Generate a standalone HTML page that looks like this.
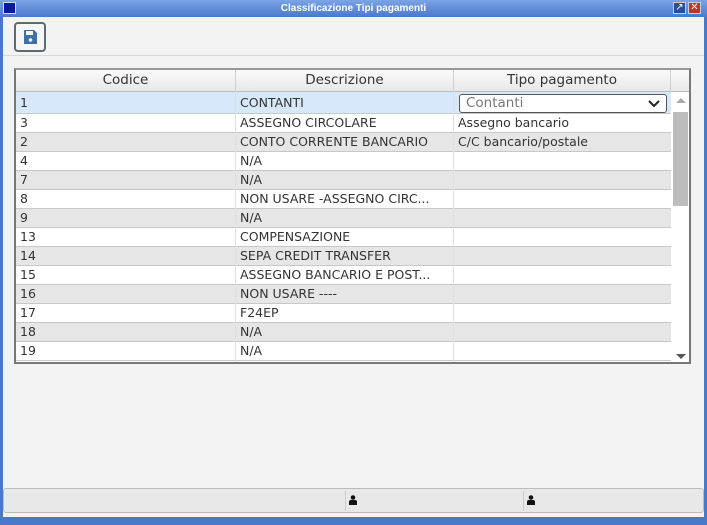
<!DOCTYPE html>
<html><head><style>
*{margin:0;padding:0;box-sizing:border-box}
body{width:707px;height:525px;overflow:hidden;background:#4a78c8;font-family:"Liberation Sans","DejaVu Sans",sans-serif;position:relative}
.title{position:absolute;left:0;top:0;width:707px;height:17px;background:linear-gradient(#7aa4e6,#4a78cc);color:#fff;font-size:10px;font-weight:bold;text-align:center;line-height:17px}
.logo{position:absolute;left:3px;top:2px;width:13px;height:12px;background:#0a1aa0;border:1px solid #cde}
.btn{position:absolute;top:2px;width:13px;height:12px;border:1px solid #ccd;color:#fff;font-size:10px;line-height:10px;text-align:center}
.client{position:absolute;left:3px;top:17px;width:701px;height:500px;background:#f3f3f3}
.tb{position:absolute;left:11px;top:5px;width:32px;height:30px;border:2px solid #606870;border-radius:4px;background:#f6f6f6}
.sep{position:absolute;left:0;top:38px;width:701px;height:1px;background:#d8d8d8}
.grid{position:absolute;left:11px;top:51px;width:677px;height:296px;border:2px solid #777;border-top-color:#999;background:#fff;overflow:hidden;font-family:"DejaVu Sans",sans-serif;font-size:12.5px;color:#333}
.hdr{position:absolute;left:0;top:0;height:22px;width:675px;background:linear-gradient(#fafafa,#e8e8e8);border-bottom:1px solid #bbb}
.hdr div{position:absolute;top:0;height:22px;line-height:21px;text-align:center;font-size:13.5px;border-right:1px solid #d0d0d0}
.row{position:absolute;left:0;width:655px;height:19px;border-bottom:1px solid #c8c8c8}
.row span{position:absolute;top:0;line-height:18px;white-space:nowrap}
.c1{left:4px}.c2{left:224px}.c3{left:442px}
.vl{position:absolute;top:22px;width:1px;height:280px;background:#e0e0e0}
.sb{position:absolute;left:655px;top:22px;width:20px;height:272px;background:#fff}
.status{position:absolute;left:0;top:471px;width:701px;height:25px;background:#e8e8e8;border:1px solid #bbb;border-radius:3px}
</style></head><body>
<div class="title">Classificazione Tipi pagamenti</div>
<div class="logo"></div>
<div class="btn" style="left:673px;background:#2a4f9a">↗</div>
<div class="btn" style="left:688px;background:#c8302a">✕</div>
<div class="client">
<div class="tb"><svg width="28" height="26" viewBox="0 0 28 26"><path d="M8 6h10l3 3v11H8z" fill="#3d6fa8"/><rect x="10" y="7" width="7" height="4" fill="#f6f6f6"/><circle cx="14.5" cy="16" r="1.8" fill="#f6f6f6"/></svg></div>
<div class="sep"></div>
<div class="grid">
<div class="hdr"><div style="left:0;width:220px">Codice</div><div style="left:220px;width:218px">Descrizione</div><div style="left:438px;width:217px">Tipo pagamento</div></div>
<div class="row" style="top:22px;height:22px;background:#d7e8fb"><span class="c1" style="line-height:22px">1</span><span class="c2" style="line-height:22px">CONTANTI</span></div>
<div style="position:absolute;left:443px;top:24px;width:208px;height:19px;border:1px solid #555;border-radius:3px;background:#fff;color:#777;font-size:13.5px;line-height:17px;padding-left:6px">Contanti<svg style="position:absolute;right:6px;top:5px" width="12" height="8"><path d="M1 1l5 5 5-5" stroke="#222" stroke-width="2" fill="none"/></svg></div>
<div class="row" style="top:44px"><span class="c1">3</span><span class="c2">ASSEGNO CIRCOLARE</span><span class="c3">Assegno bancario</span></div>
<div class="row" style="top:63px;background:#e6e6e6"><span class="c1">2</span><span class="c2">CONTO CORRENTE BANCARIO</span><span class="c3">C/C bancario/postale</span></div>
<div class="row" style="top:82px"><span class="c1">4</span><span class="c2">N/A</span></div>
<div class="row" style="top:101px;background:#e6e6e6"><span class="c1">7</span><span class="c2">N/A</span></div>
<div class="row" style="top:120px"><span class="c1">8</span><span class="c2">NON USARE -ASSEGNO CIRC...</span></div>
<div class="row" style="top:139px;background:#e6e6e6"><span class="c1">9</span><span class="c2">N/A</span></div>
<div class="row" style="top:158px"><span class="c1">13</span><span class="c2">COMPENSAZIONE</span></div>
<div class="row" style="top:177px;background:#e6e6e6"><span class="c1">14</span><span class="c2">SEPA CREDIT TRANSFER</span></div>
<div class="row" style="top:196px"><span class="c1">15</span><span class="c2">ASSEGNO BANCARIO E POST...</span></div>
<div class="row" style="top:215px;background:#e6e6e6"><span class="c1">16</span><span class="c2">NON USARE ----</span></div>
<div class="row" style="top:234px"><span class="c1">17</span><span class="c2">F24EP</span></div>
<div class="row" style="top:253px;background:#e6e6e6"><span class="c1">18</span><span class="c2">N/A</span></div>
<div class="row" style="top:272px"><span class="c1">19</span><span class="c2">N/A</span></div>
<div class="vl" style="left:219px"></div><div class="vl" style="left:437px"></div>
<div class="sb"><div style="position:absolute;left:5px;top:6px;border:5px solid transparent;border-bottom:5px solid #aaa;border-top:0"></div><div style="position:absolute;left:2px;top:20px;width:15px;height:94px;background:#bdbdbd"></div><div style="position:absolute;left:5px;top:262px;border:5px solid transparent;border-top:5px solid #555;border-bottom:0"></div></div>
</div>
<div class="status"><div style="position:absolute;left:341px;top:2px;width:1px;height:20px;background:#ccc"></div><div style="position:absolute;left:519px;top:2px;width:1px;height:20px;background:#ccc"></div>
<svg style="position:absolute;left:345px;top:6px" width="10" height="10"><circle cx="4" cy="2.5" r="2.3" fill="#111"/><path d="M0 10v-3q0-2 2-2h4q2 0 2 2v3z" fill="#111"/></svg>
<svg style="position:absolute;left:523px;top:6px" width="10" height="10"><circle cx="4" cy="2.5" r="2.3" fill="#111"/><path d="M0 10v-3q0-2 2-2h4q2 0 2 2v3z" fill="#111"/></svg></div>
</div>
</body></html>
